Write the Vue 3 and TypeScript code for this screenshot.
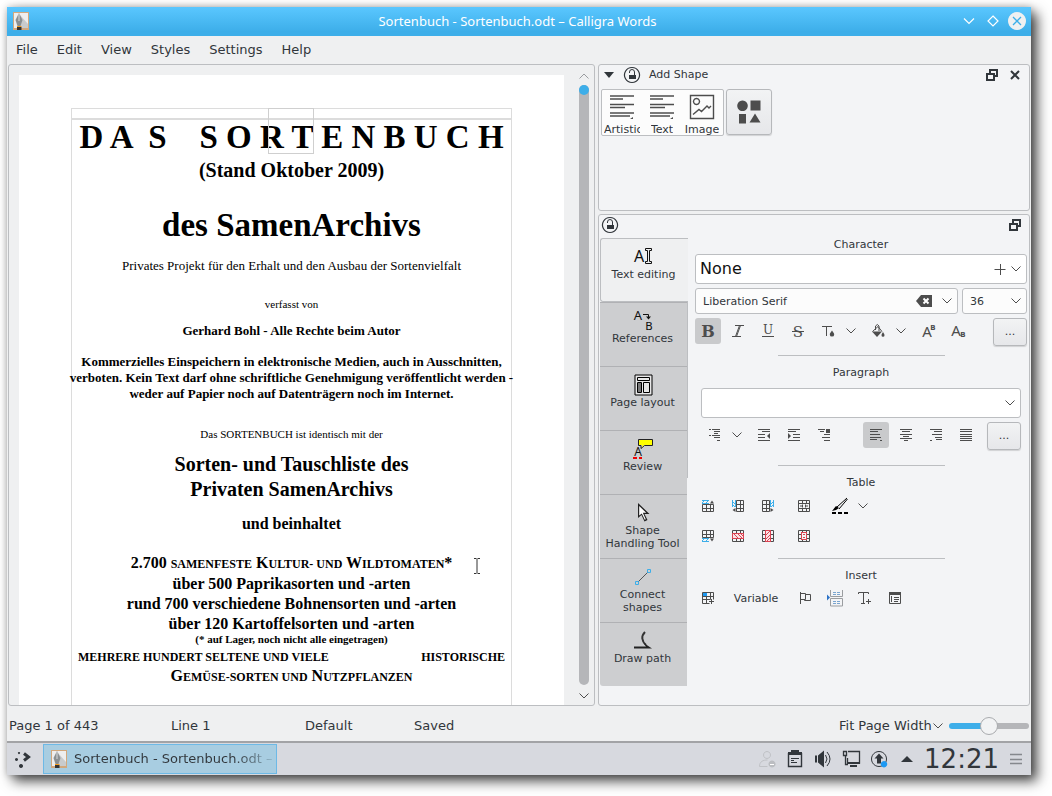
<script setup lang="ts">
import { h, ref } from 'vue'

type Shape = [kind: 's' | 'f' | 't', data: string, color?: string, extra?: Record<string, string | number>]

const ink = '#4d4d4d'
const dark = '#31363b'
const blue = '#3daee9'
const red = '#da4453'

const grid = 'M3.5 3.5h11v11h-11zM3.5 7.5h11M3.5 11.5h11M7.5 3.5v11M11.5 3.5v11'

const icons: Record<string, { size: number; shapes: Shape[] }> = {
  italic: { size: 18, shapes: [['s', 'M6 3.5h9M3 14.5h9M11.5 3.5L7.5 14.5M10.5 3.5L6.5 14.5']] },
  bold: { size: 18, shapes: [['t', 'B', ink, { x: 9, y: 15, 'font-size': 16, 'font-weight': 700, 'font-family': 'DejaVu Serif, serif' }]] },
  underline: { size: 18, shapes: [['t', 'U', ink, { x: 9, y: 12, 'font-size': 12, 'font-family': 'DejaVu Serif, serif' }], ['s', 'M3 14.5h12']] },
  strike: { size: 18, shapes: [['t', 'S', ink, { x: 9, y: 15, 'font-size': 15, 'font-family': 'DejaVu Serif, serif' }], ['s', 'M3 9.5h12']] },
  textColor: { size: 18, shapes: [['s', 'M3 4.5h10M7.5 4v10'], ['f', 'M13 8.500c1.200 2 2.200 2.500 2.200 3.900a2.200 2.200 0 0 1-4.400 0c0-1.400 1-1.900 2.200-3.900z']] },
  fill: { size: 18, shapes: [['f', 'M3 9.500h10l-5 5.500z'], ['s', 'M3.500 9.500L9 4.500l4 5M6.500 8V4q2-3 3.500 0v5'], ['f', 'M14 10c.8 1.500 1.500 2.200 1.500 3.200a1.500 1.500 0 0 1-3 0c0-1 .7-1.700 1.500-3.200z']] },
  sup: { size: 18, shapes: [['t', 'A', ink, { x: 8, y: 15, 'font-size': 15, 'font-family': 'Noto Sans, sans-serif' }], ['t', 'B', ink, { x: 14, y: 8, 'font-size': 7, 'font-weight': 700, 'font-family': 'DejaVu Sans, sans-serif' }]] },
  sub: { size: 18, shapes: [['t', 'A', ink, { x: 7, y: 14, 'font-size': 15, 'font-family': 'Noto Sans, sans-serif' }], ['t', 'B', ink, { x: 14, y: 15, 'font-size': 7, 'font-weight': 700, 'font-family': 'DejaVu Sans, sans-serif' }]] },
  chevron: { size: 12, shapes: [['s', 'M1.500 3.500L6 8l4.500-4.500', ink]] },
  chevronUp: { size: 12, shapes: [['s', 'M1.500 8.500L6 4l4.500 4.500', '#9a9c9f']] },
  plus: { size: 12, shapes: [['s', 'M.5 6.500h11M6.500 1v11']] },
  clear: { size: 16, shapes: [['f', 'M0 8l5-6h11v12H5z'], ['s', 'M7.500 5.500l5 5M12.500 5.500l-5 5', '#fff', { 'stroke-width': 2 }]] },
  list: { size: 18, shapes: [['s', 'M4 3.500h2M7 3.500h8M9 5.500h6M4 9.500h2M7 9.500h8M9 7.500h4M9 11.500h6M12 14.500h3']] },
  outdent: { size: 18, shapes: [['s', 'M3 3.500h12M7 5.500h8M3 8.500h7M3 11.500h7M3 14.500h12'], ['f', 'M15 7v6l-3-3z']] },
  indent: { size: 18, shapes: [['s', 'M3 3.500h12M3 5.500h8M8 8.500h7M8 11.500h7M3 14.500h12'], ['f', 'M3 7v6l3-3z']] },
  frameText: { size: 18, shapes: [['s', 'M3 3.500h7M5 5.500h4M9 8.500h6M7 11.500h8M9 14.500h6'], ['f', 'M11 3h4v4h-4z']] },
  left: { size: 18, shapes: [['s', 'M3 3.500h12M3 5.500h8M3 8.500h10M3 11.500h11M3 13.500h7M13 14.500h2']] },
  center: { size: 18, shapes: [['s', 'M3 3.500h12M5 5.500h8M3 8.500h12M6 10.500h6M3 12.500h12M7 14.500h4']] },
  right: { size: 18, shapes: [['s', 'M3 3.500h12M7 5.500h8M5 8.500h10M8 11.500h7M9 13.500h6M3 14.500h2']] },
  justify: { size: 18, shapes: [['s', 'M3 3.500h12M3 5.500h12M3 8.500h12M3 10.500h12M3 12.500h12M3 14.500h12']] },
  rowAbove: { size: 18, shapes: [['s', 'M3.500 7.500h11v7h-11zM3.500 11.500h11M7.500 7.500v7M11.500 7.500v7'], ['s', 'M3 6.500h7M3 3.500h7M3 6l3-3M7 6l3-3', blue], ['f', 'M11 6.500h4l-2-3z']] },
  rowBelow: { size: 18, shapes: [['s', 'M3.500 3.500h11v7h-11zM3.500 7.500h11M7.500 3.500v7M11.500 3.500v7'], ['s', 'M3 11.500h7M3 14.500h7M3 14l3-3M7 14l3-3', blue], ['f', 'M11 11.500h4l-2 3z']] },
  colBefore: { size: 18, shapes: [['s', 'M7.500 3.500h7v11h-7zM7.500 7.500h7M7.500 11.500h7M11.500 3.500v11'], ['s', 'M3.500 3v7M6.500 3v7M3 4l3 3M3 7l3 3', blue], ['f', 'M6.500 11v4l-3-2z']] },
  colAfter: { size: 18, shapes: [['s', 'M3.500 3.500h7v11h-7zM3.500 7.500h7M3.500 11.500h7M7.500 3.500v11'], ['s', 'M11.500 3v7M14.500 3v7M15 4l-3 3M15 7l-3 3', blue], ['f', 'M11.500 11v4l3-2z']] },
  merge: { size: 18, shapes: [['s', 'M3.500 3.500h11v11h-11zM7.500 3.500v3M11.500 3.500v3M7.500 11.500v3M11.500 11.500v3M3.500 6.500h11M3.500 11.500h11'], ['s', 'M5 9h3M13 9h-3M7.500 7.500v3M10.500 7.500v3']] },
  delRow: { size: 18, shapes: [['s', grid], ['f', 'M3 6h12v6H3z', '#fbe3e5'], ['s', 'M3 6.500h12M3 11.500h12M3.500 6v6M14.500 6v6M5 7l4 4M9 7l4 4M12 7l2 2', red]] },
  delCol: { size: 18, shapes: [['s', grid], ['f', 'M6 3h6v12H6z', '#fbe3e5'], ['s', 'M6.500 3v12M11.500 3v12M6 3.500h6M6 14.500h6M7 8l4-4M7 12l4-4M8 14l3-3', red]] },
  delTable: { size: 18, shapes: [['s', grid], ['f', 'M6 5h6v8H6z', '#f3f4f6'], ['s', 'M6 5.500h6M6 12.500h6M6.500 5v8M11.500 5v8M8 7.500h2M8 10.500h2', red]] },
  brush: { size: 18, shapes: [['f', 'M1 14l4-5 3 2-3 2z', '#000'], ['s', 'M6 10L16 1M8 12l8.500-10', '#000'], ['s', 'M1 16h4M7 16h4M13 16h4', '#000', { 'stroke-width': 2 }]] },
  addTable: { size: 18, shapes: [['s', 'M3.500 3.500h11v7M3.500 3.500v11h7M3.500 7.500h11M3.500 10.500h8M7.500 3.500v11M11.500 3.500v7M12.500 10v5M10 12.500h5'], ['f', 'M4 4h4v3H4z', '#1d99f3']] },
  flag: { size: 18, shapes: [['s', 'M4.500 3v12M4.500 4.500h5v6h-5M9.500 5.500h5v6h-6v-1']] },
  pageBreak: { size: 18, shapes: [['s', 'M4.500 1v6.500h12V1M4.500 17V9.500h12V17z', '#9a9da0'], ['s', 'M7 3.500h3M11 3.500h3M7 5.500h3M11 5.500h3M7 12.500h3M11 12.500h3M7 14.500h3M11 14.500h3', '#7aa5cf'], ['f', 'M1 5.500v6l3-3z', '#2c72c7']] },
  addText: { size: 18, shapes: [['s', 'M2.500 5V3.500h10V5M7.500 3.500v11M5 14.500h4M12.500 10v5M10 12.500h5']] },
  frame: { size: 18, shapes: [['s', 'M3.500 4.500h11v10h-11zM5.500 7v6M8 8.500h5M8 10.500h5M8 12.500h4'], ['f', 'M3 3h12v3H3z']] },
  lock: { size: 18, shapes: [['s', 'M9 1.500a7.500 7.500 0 1 0 .01 0z', dark, { 'stroke-width': 1.2 }], ['f', 'M6 9h7v4H6z', dark], ['s', 'M6.500 7V6a2.500 2.500 0 0 1 5 0v3.500', dark]] },
  float: { size: 14, shapes: [['s', 'M5 5V2h7v6H9', dark, { 'stroke-width': 2 }], ['s', 'M2 6h7v6H2z', dark, { 'stroke-width': 2 }]] },
  close: { size: 12, shapes: [['s', 'M2 2l8 8M10 2l-8 8', dark, { 'stroke-width': 2 }]] },
  collapse: { size: 12, shapes: [['f', 'M1 3h10L6 9z', dark]] },
  paragraphs: { size: 24, shapes: [['s', 'M0 1h24M0 4h13M0 9.500h24M0 12.500h15M0 18h24M0 21h20', ink, { 'stroke-width': 1.4 }], ['f', 'M20 24h3v-2z']] },
  image: { size: 24, shapes: [['s', 'M.5.500h23v23H.5zM6.500 3.500a3 3 0 1 0 .01 0zM3 19.500l6-5 2.500 2 5.500-5.500 2 2 2-2', ink, { 'stroke-width': 1.4 }]] },
  shapes: { size: 26, shapes: [['f', 'M6.500 1.500a5.300 5.300 0 1 0 .01 0zM14.500 1.500h10v10h-10zM3 15h7v9.500H3zM19 14.500L24.500 23.500h-11z']] },
  textEdit: { size: 22, shapes: [['t', 'A', '#111', { x: 6, y: 16, 'font-size': 16, 'font-family': 'Noto Sans, sans-serif' }], ['s', 'M12.500 2.500h6v2h-2v11h2v2h-6v-2h2v-11h-2z', '#111']] },
  references: { size: 22, shapes: [['t', 'A', '#111', { x: 6, y: 10, 'font-size': 13, 'font-family': 'Noto Sans, sans-serif' }], ['t', 'B', '#111', { x: 17, y: 20, 'font-size': 11, 'font-family': 'DejaVu Sans, sans-serif' }], ['s', 'M11 4.500h5.500v4', '#111'], ['f', 'M14 6.500h5l-2.500 3z', '#111']] },
  pageLayout: { size: 22, shapes: [['f', 'M3 1h17v20H3z', '#e8e8e8'], ['s', 'M3 1h17v20H3zM5.500 3.500h12v3h-12zM5.500 8.500h4v10h-4zM11.500 8.500h6v10h-6z', '#000'], ['f', 'M6 9h3v9H6z', '#777']] },
  review: { size: 22, shapes: [['s', 'M6.500 1.500h14v6h-8l-3.500 3v-3h-2.500z', '#222'], ['f', 'M7 2h13v5h-8l-2 2V7H7z', '#ff0'], ['t', 'A', '#111', { x: 6, y: 18, 'font-size': 12, 'font-family': 'Noto Sans, sans-serif' }], ['s', 'M1 20h4M7 20h3', '#e00', { 'stroke-width': 2 }]] },
  pointer: { size: 22, shapes: [['f', 'M6 1v15l3.500-3 3 6.500 3-1.500-3-6h5z', '#222'], ['f', 'M7.200 4v9.500l2.600-2 3 6.200 1-.5-3-6.400h3.400z', '#fff']] },
  connect: { size: 22, shapes: [['s', 'M6 16L16 6', '#555'], ['s', 'M3.500 15.500h3v3h-3zM15.500 3.500h3v3h-3z', blue]] },
  path: { size: 22, shapes: [['s', 'M13 2c-4 4-3.500 9 1 13', '#333', { 'stroke-width': 2 }], ['f', 'M2 16.500h12l-3-4 9 6H2z', '#222']] },
  users: { size: 22, shapes: [['s', 'M11 3.500a3.500 3.500 0 1 0 .01 0zM3.500 18.500c0-5 3.500-6.500 8-6.500M3.500 18.500h8', '#c0c2c6'], ['f', 'M16 12.500a3.500 3.500 0 1 0 .01 0z', '#bbbdc1'], ['s', 'M14 16.500h4', '#fff']] },
  clipboard: { size: 22, shapes: [['s', 'M4.500 5v13.500h13V5', dark, { 'stroke-width': 1.4 }], ['f', 'M4 4h3V2h8v2h3v3H4z', dark], ['s', 'M7 10.500h8M7 12.500h3M7 14.500h6', dark]] },
  volume: { size: 22, shapes: [['f', 'M3 7.500h2v7H3zM6 7.500l6-5v17l-6-5z', dark], ['s', 'M13.500 7q3 4 0 8M15 4q6 7 0 14', dark]] },
  network: { size: 22, shapes: [['s', 'M8 3.500h11.500v11.500H7.500V10M3.500 3.500h3v4h-3zM5.500 8v8.500H8', dark, { 'stroke-width': 1.3 }], ['f', 'M7 14h13v2H7zM10 17h7v2h-7z', dark]] },
  update: { size: 22, shapes: [['s', 'M11 3.500a7.500 7.500 0 1 0 .01 0z', dark], ['f', 'M11 5.500l4.500 5H13v5H9v-5H6.500z', dark], ['f', 'M16 13a3.200 3.200 0 1 0 .01 0z', '#1d99f3']] },
  expand: { size: 22, shapes: [['f', 'M5 14l6-6 6 6z', dark]] },
  menu: { size: 14, shapes: [['s', 'M1 2.500h12M1 7.500h12M1 11.500h12', '#85888d', { 'stroke-width': 1.4 }]] },
  launcher: { size: 18, shapes: [['f', 'M5 2a1 1 0 1 0 .01 0zM2.500 8a1.500 1.500 0 1 0 .01 0zM7 14a2 2 0 1 0 .01 0z', dark], ['s', 'M10 3.500l4.500 3.500-4.500 3.500', dark, { 'stroke-width': 3 }]] },
  app: { size: 18, shapes: [['f', 'M1 0h16v18H1z', '#d2a87c'], ['f', 'M2 1h14v15H2z', '#eeeeee'], ['f', 'M8 3l8 9v4H7z', '#c9cbcc'], ['f', 'M7 1l3.500 7-2 6h-3l-2-6z', '#8b9092'], ['s', 'M7 2v7', '#d8dadb'], ['f', 'M5 14h4.500v1H5z', '#f59a1a'], ['f', 'M5 15h4.500v3H5z', '#333']] },
  minimize: { size: 12, shapes: [['s', 'M1 3.500l5 5 5-5', '#fff', { 'stroke-width': 1.2 }]] },
  maximize: { size: 12, shapes: [['s', 'M6 1l5 5-5 5-5-5z', '#fff', { 'stroke-width': 1.2 }]] },
  quit: { size: 18, shapes: [['f', 'M9 0a9 9 0 1 0 .01 0z', '#eff0f1'], ['s', 'M5 5l8 8M13 5l-8 8', blue, { 'stroke-width': 1.3 }]] },
  ibeam: { size: 18, shapes: [['s', 'M6 1.500h2.500M9.500 1.500H12M9 2v14M6 16.500h2.500M9.500 16.500H12', '#333']] },
}

const Icon = (props: { name: string }) => {
  const icon = icons[props.name]
  return h(
    'svg',
    { class: 'icon', width: icon.size, height: icon.size, viewBox: `0 0 ${icon.size} ${icon.size}`, 'aria-hidden': 'true' },
    icon.shapes.map(([kind, data, color = ink, extra = {}]) => {
      if (kind === 't') return h('text', { fill: color, 'text-anchor': 'middle', ...extra }, data)
      if (kind === 's') return h('path', { d: data, fill: 'none', stroke: color, ...extra })
      return h('path', { d: data, fill: color, ...extra })
    }),
  )
}
Icon.props = ['name']

const heading = 'D A  S    S O R T E N B U C H'
const menus = ['File', 'Edit', 'View', 'Styles', 'Settings', 'Help']
const tools = [
  { icon: 'textEdit', label: 'Text editing' },
  { icon: 'references', label: 'References' },
  { icon: 'pageLayout', label: 'Page layout' },
  { icon: 'review', label: 'Review' },
  { icon: 'pointer', label: 'Shape Handling Tool' },
  { icon: 'connect', label: 'Connect shapes' },
  { icon: 'path', label: 'Draw path' },
]
const shapeKinds = [
  { icon: 'paragraphs', label: 'Artistic' },
  { icon: 'paragraphs', label: 'Text' },
  { icon: 'image', label: 'Image' },
]
const tray = ['users', 'clipboard', 'volume', 'network', 'update', 'expand']
const activeTool = ref('Text editing')
const fontFamily = ref('Liberation Serif')
const fontSize = ref('36')
const bold = ref(true)
const align = ref('left')
const zoomLevel = ref(50)
</script>

<template>
  <div class="desktop">
    <div class="window">
      <header class="titlebar">
        <Icon name="app" />
        <h1>Sortenbuch - Sortenbuch.odt – Calligra Words</h1>
        <div class="window-buttons">
          <button aria-label="Minimize"><Icon name="minimize" /></button>
          <button aria-label="Maximize"><Icon name="maximize" /></button>
          <button aria-label="Close"><Icon name="quit" /></button>
        </div>
      </header>

      <nav class="menubar">
        <button v-for="m in menus" :key="m">{{ m }}</button>
      </nav>

      <main class="workspace">
        <section class="viewer" aria-label="Document">
          <article class="page">
            <div class="page-header"></div>
            <div class="page-body">
              <p class="display">{{ heading }}</p>
              <p class="large edition">(Stand Oktober 2009)</p>
              <p class="display archive">des SamenArchivs</p>
              <p class="body project">Privates Projekt für den Erhalt und den Ausbau der Sortenvielfalt</p>
              <p class="small by">verfasst von</p>
              <p class="body strong author">Gerhard Bohl - Alle Rechte beim Autor</p>
              <p class="body strong legal">
                Kommerzielles Einspeichern in elektronische Medien, auch in Ausschnitten,<br />
                verboten. Kein Text darf ohne schriftliche Genehmigung veröffentlicht werden -<br />
                weder auf Papier noch auf Datenträgern noch im Internet.
              </p>
              <p class="small identical">Das SORTENBUCH ist identisch mit der</p>
              <p class="large exchange">Sorten- und Tauschliste des<br />Privaten SamenArchivs</p>
              <p class="medium contains">und beinhaltet</p>
              <p class="medium counts">
                2.700 <span class="caps">SAMENFESTE</span> K<span class="caps">ULTUR- UND</span> W<span class="caps">ILDTOMATEN</span>*<br />
                über 500 Paprikasorten und -arten<br />
                rund 700 verschiedene Bohnensorten und -arten<br />
                über 120 Kartoffelsorten und -arten
              </p>
              <p class="small strong stock">(* auf Lager, noch nicht alle eingetragen)</p>
              <p class="caps spread"><span>MEHRERE HUNDERT SELTENE UND VIELE</span><span>HISTORISCHE</span></p>
              <p class="medium">G<span class="caps">EMÜSE-SORTEN UND</span> N<span class="caps">UTZPFLANZEN</span></p>
            </div>
            <div class="anchor-box"></div>
            <Icon name="ibeam" class="ibeam" />
          </article>
          <div class="scroller">
            <button aria-label="Scroll up"><Icon name="chevronUp" /></button>
            <div class="track"><span class="thumb"></span></div>
            <button aria-label="Scroll down"><Icon name="chevron" /></button>
          </div>
        </section>

        <aside class="docks">
          <section class="dock shapes-dock">
            <header class="dock-head">
              <button aria-label="Collapse"><Icon name="collapse" /></button>
              <button aria-label="Lock"><Icon name="lock" /></button>
              <h2>Add Shape</h2>
              <button class="push" aria-label="Float"><Icon name="float" /></button>
              <button aria-label="Close dock"><Icon name="close" /></button>
            </header>
            <div class="shape-row">
              <div class="shape-list">
                <button v-for="s in shapeKinds" :key="s.label"><Icon :name="s.icon" /><span>{{ s.label }}</span></button>
              </div>
              <button class="raised more-shapes" aria-label="More shapes"><Icon name="shapes" /></button>
            </div>
          </section>

          <section class="dock tool-dock">
            <header class="dock-head">
              <button aria-label="Lock"><Icon name="lock" /></button>
              <button class="push" aria-label="Float"><Icon name="float" /></button>
            </header>
            <div class="tool-body">
              <div class="tabs" role="tablist">
                <button
                  v-for="t in tools" :key="t.label" role="tab"
                  :aria-selected="activeTool === t.label" :class="{ active: activeTool === t.label }"
                  @click="activeTool = t.label"
                ><Icon :name="t.icon" /><span>{{ t.label }}</span></button>
              </div>

              <div class="options">
                <h3>Character</h3>
                <div class="field tall">
                  <select class="big" aria-label="Character style"><option>None</option></select>
                  <button aria-label="New style"><Icon name="plus" /></button>
                  <Icon name="chevron" />
                </div>
                <div class="fonts">
                  <div class="field">
                    <input v-model="fontFamily" aria-label="Font family" />
                    <button class="wipe" aria-label="Clear" @click="fontFamily = ''"><Icon name="clear" /></button>
                    <button aria-label="Show fonts"><Icon name="chevron" /></button>
                  </div>
                  <div class="field size">
                    <input v-model="fontSize" aria-label="Font size" />
                    <button aria-label="Show sizes"><Icon name="chevron" /></button>
                  </div>
                </div>
                <div class="tools">
                  <button :class="{ on: bold }" aria-label="Bold" @click="bold = !bold"><Icon name="bold" /></button>
                  <button aria-label="Italic"><Icon name="italic" /></button>
                  <button aria-label="Underline"><Icon name="underline" /></button>
                  <button aria-label="Strikethrough"><Icon name="strike" /></button>
                  <div class="split"><button aria-label="Text color"><Icon name="textColor" /></button><button class="arrow" aria-label="Text colors"><Icon name="chevron" /></button></div>
                  <div class="split"><button aria-label="Background"><Icon name="fill" /></button><button class="arrow" aria-label="Backgrounds"><Icon name="chevron" /></button></div>
                  <button aria-label="Superscript"><Icon name="sup" /></button>
                  <button aria-label="Subscript"><Icon name="sub" /></button>
                  <button class="raised dots">...</button>
                </div>
                <hr />

                <h3>Paragraph</h3>
                <div class="inset">
                  <div class="field tall">
                    <select class="big" aria-label="Paragraph style"><option></option></select>
                    <Icon name="chevron" />
                  </div>
                  <div class="tools">
                    <div class="split"><button aria-label="List"><Icon name="list" /></button><button class="arrow" aria-label="List styles"><Icon name="chevron" /></button></div>
                    <button aria-label="Outdent"><Icon name="outdent" /></button>
                    <button aria-label="Indent"><Icon name="indent" /></button>
                    <button aria-label="Text direction"><Icon name="frameText" /></button>
                    <div class="aligns">
                      <button
                        v-for="a in ['left', 'center', 'right', 'justify']" :key="a"
                        :aria-label="'Align ' + a" :class="{ on: align === a }" @click="align = a"
                      ><Icon :name="a" /></button>
                    </div>
                    <button class="raised dots">...</button>
                  </div>
                </div>
                <hr />

                <h3>Table</h3>
                <div class="tools">
                  <button aria-label="Row above"><Icon name="rowAbove" /></button>
                  <button aria-label="Column before"><Icon name="colBefore" /></button>
                  <button aria-label="Column after"><Icon name="colAfter" /></button>
                  <button class="apart" aria-label="Merge cells"><Icon name="merge" /></button>
                  <div class="split apart"><button aria-label="Border"><Icon name="brush" /></button><button class="arrow" aria-label="Border styles"><Icon name="chevron" /></button></div>
                </div>
                <div class="tools">
                  <button aria-label="Row below"><Icon name="rowBelow" /></button>
                  <button aria-label="Delete row"><Icon name="delRow" /></button>
                  <button aria-label="Delete column"><Icon name="delCol" /></button>
                  <button class="apart" aria-label="Split cells"><Icon name="delTable" /></button>
                </div>
                <hr />

                <h3>Insert</h3>
                <div class="tools insert">
                  <button aria-label="Insert table"><Icon name="addTable" /></button>
                  <button class="variable">Variable</button>
                  <button aria-label="Bookmark"><Icon name="flag" /></button>
                  <button aria-label="Page break"><Icon name="pageBreak" /></button>
                  <button aria-label="Special character"><Icon name="addText" /></button>
                  <button aria-label="Frame"><Icon name="frame" /></button>
                </div>
              </div>
            </div>
          </section>
        </aside>
      </main>

      <footer class="status">
        <span>Page 1 of 443</span>
        <span>Line 1</span>
        <span>Default</span>
        <span>Saved</span>
        <div class="zoom">
          <select aria-label="Zoom mode"><option>Fit Page Width</option></select>
          <Icon name="chevron" />
          <input v-model="zoomLevel" type="range" min="0" max="100" aria-label="Zoom" />
        </div>
      </footer>

      <div class="taskbar">
        <button class="launcher" aria-label="Applications"><Icon name="launcher" /></button>
        <button class="task"><Icon name="app" /><span>Sortenbuch - Sortenbuch.odt –</span></button>
        <div class="tray">
          <button v-for="t in tray" :key="t" :aria-label="t"><Icon :name="t" /></button>
          <time>12:21</time>
          <button aria-label="Panel menu"><Icon name="menu" /></button>
        </div>
      </div>
    </div>
  </div>
</template>

<style>
body { margin: 0; background: #fff; }
</style>

<style scoped>
* { box-sizing: border-box; }
.desktop { height: 100vh; padding: 7px 21px 21px 7px; overflow: hidden; font: 13px/16px "DejaVu Sans", sans-serif; color: #31363b; }
.window { height: 100%; display: flex; flex-direction: column; background: #eff0f1; box-shadow: 0 0 7px rgba(0, 0, 0, 0.22), 6px 6px 12px rgba(0, 0, 0, 0.72); }
button, input, select { font: inherit; color: inherit; margin: 0; padding: 0; border: 0; background: none; outline: 0; }
button { display: flex; align-items: center; justify-content: center; }
select { appearance: none; }
h1, h2, h3, p { margin: 0; font-size: inherit; font-weight: 400; }
.icon { display: block; flex: none; overflow: visible; }

.titlebar { flex: none; height: 29px; display: flex; align-items: center; padding: 0 5px 2px; background: linear-gradient(#5ac7ff, #3daee9 85%); color: #fff; }
.titlebar h1 { flex: 1; text-align: center; font: 13px/18px "Noto Sans", sans-serif; padding-left: 42px; }
.window-buttons { display: flex; align-items: center; gap: 12px; }
.window-buttons button:last-child { margin-left: -3px; }

.menubar { flex: none; height: 28px; display: flex; align-items: center; gap: 19px; padding: 0 9px; }

.workspace { flex: 1; min-height: 0; display: flex; gap: 3px; padding: 0 1px; }
.viewer { flex: 1; min-width: 0; display: flex; overflow: hidden; padding: 10px 0 0 10px; border: 1px solid #bcbec1; border-radius: 3px; }
.page { position: relative; flex: 1; min-width: 0; padding: 33px 52px 0; background: #fff; }
.page-header { height: 10px; border: 1px solid #dcdcdc; border-bottom: 0; }
.page-body { height: 700px; border: 1px solid #dcdcdc; border-top: 2px solid #dcdcdc; font-family: "Liberation Serif", serif; color: #000; text-align: center; white-space: nowrap; }
.display { font-size: 33px; line-height: 34px; font-weight: 700; white-space: pre; }
.large { font-size: 20px; line-height: 25px; font-weight: 700; }
.medium { font-size: 16px; line-height: 20px; font-weight: 700; }
.body { font-size: 13px; line-height: 16px; }
.small { font-size: 11px; line-height: 14px; }
.strong { font-weight: 700; }
.page-body .edition { margin-top: 4px; }
.page-body .archive { margin-top: 25px; }
.page-body .project { margin-top: 16px; }
.page-body .by { margin-top: 23px; }
.page-body .author { margin-top: 12px; }
.page-body .legal { margin: 15px -8px 0; }
.page-body .identical { margin-top: 25px; }
.page-body .exchange { margin-top: 11px; }
.page-body .contains { margin-top: 12px; }
.page-body .counts { margin-top: 19px; }
.page-body .stock { margin: -2px 0 2px; }
.caps { font-size: 12px; font-weight: 700; }
.page-body .spread { display: flex; justify-content: space-between; padding: 0 6px; line-height: 18px; }
.anchor-box { position: absolute; top: 33px; left: 249px; width: 46px; height: 46px; border: 1px solid #cfcfcf; }
.ibeam { position: absolute; top: 482px; left: 449px; }

.scroller { flex: none; width: 30px; display: flex; flex-direction: column; align-items: center; padding-left: 10px; }
.scroller button { height: 10px; align-items: flex-end; }
.scroller button:first-child { align-items: center; padding-bottom: 8px; }
.scroller button:last-child { height: 20px; align-items: center; padding-top: 2px; }
.track { flex: 1; width: 10px; border-radius: 5px; background: #b5b6b9; }
.thumb { display: block; width: 10px; height: 10px; border-radius: 5px; background: #3daee9; }

.docks { flex: 0 0 432px; display: flex; flex-direction: column; gap: 3px; }
.dock { border: 1px solid #bcbec1; border-radius: 3px; background: #f3f4f6; font-size: 11px; line-height: 13px; }
.shapes-dock { flex: 0 0 147px; }
.tool-dock { flex: 1; min-height: 0; }
.dock-head { display: flex; align-items: center; gap: 8px; height: 19px; padding: 0 8px 0 4px; }
.dock-head .push { margin-left: auto; }
.tool-dock .dock-head { padding: 0 7px 0 2px; }
.shapes-dock .dock-head button:last-child { margin-left: 2px; }
.shape-row { display: flex; gap: 2px; padding: 5px 2px; }
.shape-list { display: flex; height: 47px; padding-right: 1px; border: 1px solid #bcbec1; border-radius: 2px; background: #fcfcfc; }
.shape-list button { width: 40px; flex-direction: column; justify-content: flex-start; gap: 5px; padding: 5px 2px 0; overflow: hidden; }
.shape-list span { max-width: 100%; overflow: hidden; line-height: 12px; }
.raised { border: 1px solid #b6b8bb; border-radius: 3px; background: linear-gradient(#f2f3f4, #e6e7ea); box-shadow: 0 1px 1px rgba(0, 0, 0, 0.14); }
.more-shapes { width: 46px; height: 46px; }

.tool-body { display: flex; padding: 4px 1px 0; }
.tabs { position: relative; flex: 0 0 88px; align-self: flex-start; }
.tabs::before { content: ""; position: absolute; right: 0; top: 0; width: 1px; height: 240px; background: #bcbec1; }
.tabs button { width: 87px; height: 64px; padding: 7px 5px 0 3px; flex-direction: column; justify-content: flex-start; border-top: 1px solid #b0b1b4; background: #cdced0; }
.tabs button.active { position: relative; width: 88px; border: 1px solid #bcbec1; border-right: 0; border-radius: 3px 0 0 3px; background: #eff0f1; }
.tabs button:last-child { border-radius: 0 0 0 3px; }

.options { flex: 1; min-width: 0; padding: 0 1px 0 7px; }
.options h3 { text-align: center; line-height: 13px; }
.field { flex: 1; display: flex; align-items: center; gap: 4px; height: 26px; padding: 0 4px 0 7px; border: 1px solid #bcbec1; border-radius: 3px; background: #fcfcfc; }
.field input, .field select { flex: 1; min-width: 0; width: 0; }
.field.tall { height: 30px; padding-left: 4px; background: #fff; }
.field .big { font-size: 16px; line-height: 20px; color: #111; }
.fonts { display: flex; gap: 4px; margin-top: 4px; }
.fonts .size { flex: 0 0 65px; }
.wipe { margin-right: 5px; }
.options h3 + .field { margin-top: 3px; }
.options h3 + .inset { margin-top: 9px; }
.tools { display: flex; align-items: flex-start; gap: 4px; margin-top: 4px; }
.tools button { flex: none; width: 26px; height: 26px; border-radius: 3px; }
.tools .on { background: #c9cacc; }
.split, .aligns { display: flex; }
.tools .arrow { width: 20px; }
.tools .dots { width: 34px; height: 28px; margin-left: auto; padding-bottom: 2px; }
.aligns { gap: 4px; margin-left: 22px; }
.options hr { width: 167px; height: 1px; margin: 9px auto 10px; border: 0; background: #bcbec1; }
.inset { padding: 0 6px; }
.options .inset + hr { margin-top: 15px; }
.tools .apart { margin-left: 6px; }
.options .insert { margin-top: 3px; }
.tools .variable { width: 62px; margin-right: 1px; }

.status { flex: none; height: 35px; display: grid; grid-template-columns: 162px 134px 109px 1fr auto; align-items: center; padding: 4px 2px 0; }
.zoom { display: flex; align-items: center; gap: 5px; }
.zoom select { margin-right: -5px; }
.zoom input { appearance: none; width: 80px; height: 18px; }
.zoom input::-webkit-slider-runnable-track { height: 6px; border-radius: 3px; background: linear-gradient(90deg, #3daee9 50%, #b5b6b9 50%); }
.zoom input::-webkit-slider-thumb { appearance: none; width: 18px; height: 18px; margin-top: -6px; border: 1px solid #a9abae; border-radius: 50%; background: #f2f3f4; }

.taskbar { flex: none; height: 34px; display: flex; align-items: center; padding: 0 5px 0 7px; border-top: 2px solid #a2a3a6; background: #d7d9df; }
.launcher { width: 18px; }
.task { width: 234px; height: 30px; margin-left: 11px; padding: 0 6px; justify-content: flex-start; gap: 6px; border: 1px solid #6db9e6; background: #a8cde1; white-space: nowrap; }
.task span { background: linear-gradient(90deg, #31363b 80%, #8fb3c6); background-clip: text; color: transparent; }
.tray { display: flex; align-items: center; gap: 6px; margin-left: auto; }
.tray time { font-size: 26px; line-height: 30px; }
.tray > button:last-child { width: 21px; }
</style>
